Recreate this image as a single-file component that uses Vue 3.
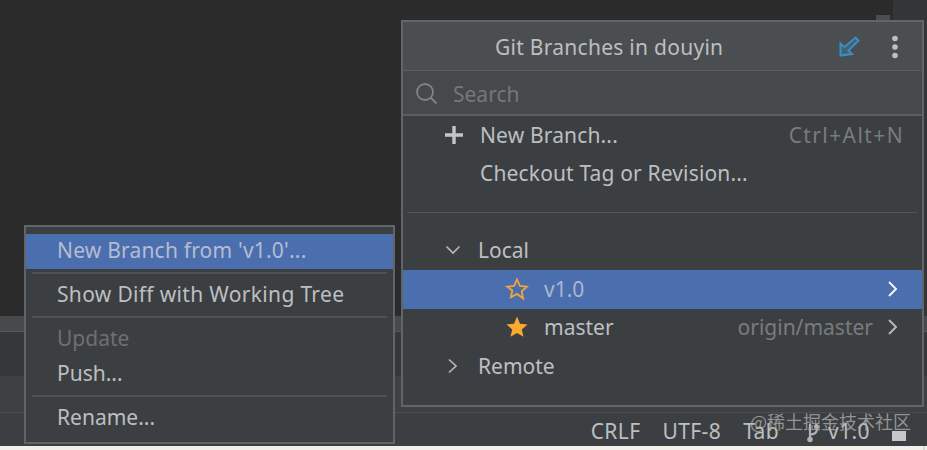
<script setup>
const menu = [
  { groups: [{ text: "New Branch from 'v1.0'...", cls: 'sel' }] },
  { groups: [{ text: 'Show Diff with Working Tree', cls: 'wide' }] },
  { groups: [{ text: 'Update', cls: 'dis' }, { text: 'Push...' }] },
  { groups: [{ text: 'Rename...' }] },
]
</script>

<template>
  <div class="page">
    <div class="editor">
      <div class="scroll-mark"></div>
      <div class="strip"></div>
    </div>
    <div class="hscroll"></div>
    <div class="toolpane"></div>
    <div class="toolbar"></div>
    <div class="status">
      <span>CRLF</span><span>UTF-8</span><span>Tab</span>
      <span class="vcs">
        <svg width="12" height="20" viewBox="0 0 12 20"><circle cx="3" cy="16.500" r="2.800" fill="#b0b2b3"/><path d="M3 1v15M3 11.500c5 0 7-2 7-6" fill="none" stroke="#b0b2b3" stroke-width="2.200"/><circle cx="9.500" cy="3.500" r="2.500" fill="#b0b2b3"/></svg>
        <span>v1.0</span>
      </span>
      <i class="lock"></i>
    </div>
    <div class="foot"></div>
    <div class="wm">@稀土掘金技术社区</div>

    <section class="popup">
      <header class="head">
        <span class="title">Git Branches in douyin</span>
        <svg class="pin" width="22" height="22" viewBox="0 0 22 22"><path d="M17.500 1.500l3 3L10.500 14.500l3.500 3.500-11.500 1.500V7.500L6.500 11z" fill="#3e6478" stroke="#3f8dbd" stroke-width="2" stroke-linejoin="miter"/></svg>
        <svg class="dots" width="10" height="24" viewBox="0 0 10 24"><circle cx="5" cy="3.500" r="2.800" fill="#bcbfc0"/><circle cx="5" cy="12" r="2.800" fill="#bcbfc0"/><circle cx="5" cy="20.500" r="2.800" fill="#bcbfc0"/></svg>
      </header>
      <div class="search">
        <svg width="24" height="24" viewBox="0 0 24 24"><circle cx="10" cy="10" r="8" fill="none" stroke="#7f8385" stroke-width="1.800"/><path d="M15.500 15.500l6 6" stroke="#7f8385" stroke-width="2"/></svg>
        <span>Search</span>
      </div>
      <div class="list">
        <div class="row action">
          <svg class="plus" width="20" height="20" viewBox="0 0 20 20"><path d="M10 1v18M1 10h18" stroke="#c3c6c7" stroke-width="3.400"/></svg>
          <span>New Branch...</span><em>Ctrl+Alt+N</em>
        </div>
        <div class="row action"><span class="wide">Checkout Tag or Revision...</span></div>
        <hr class="rule" />
        <div class="row tree">
          <svg width="16" height="16" viewBox="0 0 16 16"><path d="M1.500 4.500L8 11l6.500-6.500" fill="none" stroke="#b4b7b8" stroke-width="1.700"/></svg>
          <span>Local</span>
        </div>
        <div class="row branch current">
          <svg class="star" width="24" height="24" viewBox="0 0 24 24"><path d="M12 2.500l2.900 6.400 7 .8-5.200 4.700 1.400 6.900L12 16.900l-6.100 3.400 1.400-6.900L2.100 9.700l7-.8z" fill="none" stroke="#f0a63c" stroke-width="1.800"/></svg>
          <span class="bname">v1.0</span>
          <svg class="chev" width="14" height="18" viewBox="0 0 14 18"><path d="M3 2l7 7-7 7" fill="none" stroke="#f2f4f6" stroke-width="2"/></svg>
        </div>
        <div class="row branch short">
          <svg class="star" width="24" height="24" viewBox="0 0 24 24"><path d="M12 1.500l3 7.200 7.500.7-5.700 5 1.700 7.400L12 18l-6.500 3.800 1.700-7.400-5.700-5 7.500-.7z" fill="#f9a92f"/></svg>
          <span class="bname">master</span>
          <em class="track">origin/master</em>
          <svg class="chev" width="14" height="18" viewBox="0 0 14 18"><path d="M3 2l7 7-7 7" fill="none" stroke="#b4b7b8" stroke-width="2"/></svg>
        </div>
        <div class="row tree">
          <svg width="16" height="16" viewBox="0 0 16 16"><path d="M4 1.500L11 8l-7 6.500" fill="none" stroke="#b4b7b8" stroke-width="1.700"/></svg>
          <span>Remote</span>
        </div>
      </div>
    </section>

    <section class="menu">
      <template v-for="(block, i) in menu" :key="i">
        <div v-if="i" class="sep"></div>
        <div v-for="item in block.groups" :key="item.text" class="item" :class="item.cls">{{ item.text }}</div>
      </template>
    </section>
  </div>
</template>

<style scoped>
.page {
  position: relative;
  width: 927px;
  height: 450px;
  overflow: hidden;
  display: flex;
  flex-direction: column;
  background: #2b2b2b;
  font-family: "Noto Sans", "Open Sans", sans-serif;
  font-size: 21px;
  color: #bcbfc1;
}
.editor { position: relative; height: 316px; background: #2b2b2b; }
.strip { position: absolute; right: 0; top: 0; bottom: 0; width: 34px; background: #333537; }
.scroll-mark { position: absolute; left: 876px; top: 15px; width: 14px; height: 8px; background: #4b4e50; }
.hscroll { height: 15px; background: #47494b; border-bottom: 1px solid #555759; }
.toolpane { height: 44px; background: #35383a; }
.toolbar { height: 36px; background: #3e4042; }
.status {
  height: 30px;
  padding-top: 3px;
  background: #3c3f41;
  border-top: 1px solid #4a4c4e;
  display: flex;
  align-items: center;
  justify-content: flex-end;
  gap: 22px;
  padding-right: 21px;
  line-height: 1;
  letter-spacing: 0.4px;
}
.vcs { display: flex; align-items: center; gap: 9px; }
.vcs svg { margin-left: 6px; margin-top: 3px; }
.lock { width: 14px; height: 10px; background: #c5c7c8; margin-top: 9px; }
.foot { flex: 1; background: #f1f1e9; border-right: 2px solid #d8d8d2; margin-right: 2px; box-shadow: 2px 0 0 #f1f1e9; }
.wm {
  position: absolute;
  left: 750px;
  top: 409px;
  font-family: "Noto Sans CJK SC", sans-serif;
  font-size: 18px;
  line-height: 24px;
  color: rgba(175, 178, 180, 0.75);
}

.popup {
  position: absolute;
  left: 401px;
  top: 20px;
  width: 523px;
  height: 387px;
  box-sizing: border-box;
  border: 2px solid #626567;
  background: #3c3f41;
  display: flex;
  flex-direction: column;
}
.head {
  height: 47px;
  padding-top: 1px;
  flex: none;
  display: flex;
  align-items: center;
  background: #4a4e50;
  border-bottom: 1px solid #5b5e60;
}
.title { margin-left: 92px; flex: 1; letter-spacing: 0.27px; }
.pin { margin-right: 30px; }
.dots { margin-right: 22px; }
.search {
  height: 41px;
  padding-top: 2px;
  flex: none;
  display: flex;
  align-items: center;
  gap: 14px;
  padding-left: 12px;
  background: #45494b;
  border-bottom: 2px solid #5b5e60;
  color: #74787a;
}
.list { flex: 1; display: flex; flex-direction: column; }
.row { box-sizing: border-box; height: 39px; padding-bottom: 2px; flex: none; display: flex; align-items: center; }
.action { height: 38px; padding-bottom: 0; padding-left: 77px; padding-right: 18px; position: relative; }
.plus { position: absolute; left: 41px; top: 9px; }
.action em { margin-left: auto; font-style: normal; color: #787c7e; letter-spacing: 1.4px; }
.action span:first-of-type { letter-spacing: 0.15px; }
.action .wide { letter-spacing: 0.5px; }
.rule { margin: 20px 5px 18px 4px; height: 1px; border: 0; background: #54575a; }
.tree { padding-left: 42px; gap: 17px; }
.branch { padding-left: 102px; position: relative; }
.short { height: 38px; }
.star { margin-right: 15px; }
.bname { flex: none; }
.current { background: #4b6eaf; color: #a9b7cf; }
.track { margin-left: auto; font-style: normal; color: #787c7e; margin-right: 13px; }
.current .chev { margin-left: auto; }
.chev { margin-right: 22px; }

.menu {
  position: absolute;
  left: 24px;
  top: 225px;
  width: 371px;
  height: 219px;
  box-sizing: border-box;
  border: 2px solid #626567;
  background: #3c3f41;
  padding-top: 7px;
}
.item { height: 35px; line-height: 33px; padding-left: 31px; }
.sel { background: #4b6eaf; color: #b4bdcf; letter-spacing: 0.2px; }
.dis { color: #6d7072; }
.wide { letter-spacing: 0.33px; }
.sep { height: 2px; margin: 3px 6px 4px 6px; background: #4f5254; }
</style>
